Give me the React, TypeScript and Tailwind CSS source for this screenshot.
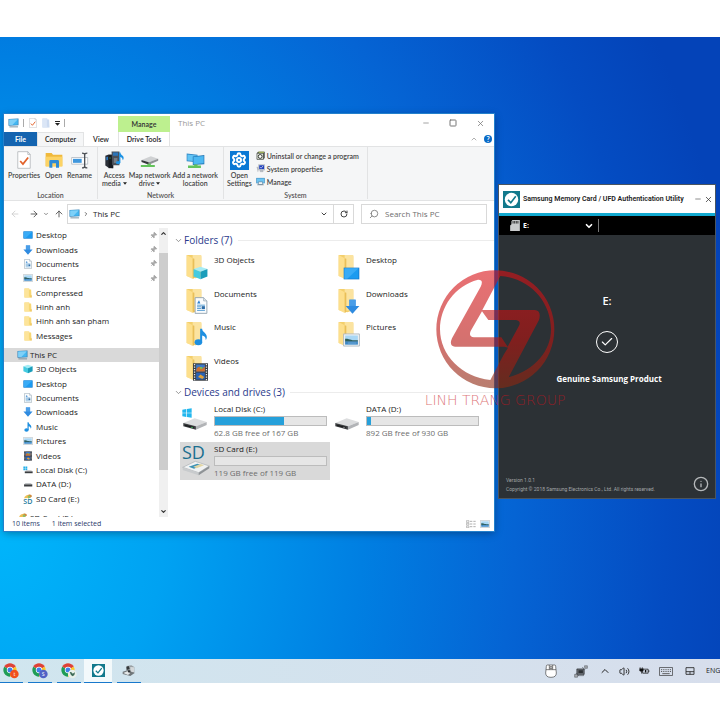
import { useState } from "react";
import type { ReactNode } from "react";
import {
  ArrowLeft,
  ArrowRight,
  ArrowUp,
  Check,
  ChevronDown,
  ChevronRight,
  ChevronUp,
  Info,
  Minus,
  Pin,
  RotateCw,
  Search,
  Settings,
  Square,
  Volume2,
  X,
} from "lucide-react";

/* ---------- icons ---------- */

function PcIcon({ className }: { className?: string }) {
  return (
    <svg viewBox="0 0 24 22" className={className}>
      <path d="M1 2l22-1v15l-22 1z" fill="#2f7fb5" />
      <path d="M2.500 3.400l19-.9v12.200l-19 .9z" fill="#45b7f2" />
      <path d="M2.500 3.400l19-.9-12 12.800-7 .3z" fill="#7ed0f8" />
      <path d="M3 19.500h19" stroke="#6b8799" strokeWidth="2" />
    </svg>
  );
}

function DesktopIcon({ className }: { className?: string }) {
  return (
    <svg viewBox="0 0 24 20" preserveAspectRatio="none" className={className}>
      <path d="M1 1h22v18H1z" fill="#1173c9" />
      <path d="M2 2h20v16H2z" fill="#1c9bf0" />
      <path d="M2 2h20L6 18H2z" fill="#39abf6" />
    </svg>
  );
}

function DownloadIcon({ className }: { className?: string }) {
  return (
    <svg viewBox="0 0 24 24" className={className}>
      <path d="M7 1h10v10h6L12 23.500 1 11h6z" fill="#2f8be0" />
      <path d="M7 1h10v10h-10z" fill="#4a9ee8" />
    </svg>
  );
}

function DocumentIcon({ className }: { className?: string }) {
  return (
    <svg viewBox="0 0 20 26" className={className}>
      <path d="M1 1h13l5 5v19H1z" fill="#fafcfd" stroke="#93a3b0" strokeWidth="1.400" />
      <path d="M14 1v5h5" fill="#dfe6ea" stroke="#93a3b0" />
      <path d="M4 10l3-5 2 5z" fill="#2b7fd0" />
      <path d="M4 12.500h12M4 15h6M4 17.500h6M4 20.500h12" stroke="#5a9fd4" strokeWidth="1.500" />
      <path d="M11 14h5v4.500h-5z" fill="#2b6ca8" />
    </svg>
  );
}

function PictureIcon({ className }: { className?: string }) {
  return (
    <svg viewBox="0 0 28 22" className={className}>
      <path d="M1 1h26v20H1z" fill="#f3f5f6" stroke="#a9b3ba" strokeWidth="1.400" />
      <path d="M3.500 3.500h21v15h-21z" fill="#a9d7f5" />
      <path d="M3.500 9c6-1 7 3 21 2.500V14h-21z" fill="#2e5f5c" />
      <path d="M3.500 13.500h21v5h-21z" fill="#3f87c4" />
      <path d="M8 16h14" stroke="#8cc2e8" />
    </svg>
  );
}

function MusicIcon({ className }: { className?: string }) {
  return (
    <svg viewBox="0 0 24 30" className={className}>
      <ellipse cx="7.500" cy="24" rx="6.500" ry="5" fill="#1e8fe0" />
      <path d="M10.500 24V1h3.500c0 6 8 7 8 14 0 2-.8 4-2 5 .5-5-3-7-6-7.500V24z" fill="#1e8fe0" />
    </svg>
  );
}

function VideoIcon({ className }: { className?: string }) {
  return (
    <svg viewBox="0 0 24 28" className={className}>
      <path d="M0 0h24v28H0z" fill="#3b3f45" />
      <path d="M5 2h14v11H5z" fill="#3c78c8" />
      <path d="M5 15h14v11H5z" fill="#2a62b4" />
      <path d="M6 8l4-3 4 4 5-4v8H5z" fill="#cf6f2f" />
      <path d="M8 22l4-4 6 4-3 3z" fill="#e0a23a" />
      <path d="M11 6h4v3h-4z" fill="#7fc04a" />
      <path d="M2.500 1v26M21.500 1v26" stroke="#e8eaec" strokeWidth="2" strokeDasharray="2 2" />
    </svg>
  );
}

function CubeIcon({ className }: { className?: string }) {
  return (
    <svg viewBox="0 0 26 24" className={className}>
      <path d="M13 1l12 4-12 5L1 5z" fill="#a5ecf5" />
      <path d="M1 5l12 5v13L1 18z" fill="#45cbe0" />
      <path d="M25 5l-12 5v13l12-5z" fill="#1a9dba" />
    </svg>
  );
}

function SmallFolderIcon({ className }: { className?: string }) {
  return (
    <svg viewBox="0 0 18 22" className={className}>
      <path d="M1 1h11v2h4l1 18H1z" fill="#f7d774" />
      <path d="M1 1h10v18l5 2H1z" fill="#fde49a" />
      <path d="M15 16h2v5h-2z" fill="#e8b94a" />
    </svg>
  );
}

function NewFolderIcon({ className }: { className?: string }) {
  return (
    <svg viewBox="0 0 18 22" className={className}>
      <path d="M1 1h11v2h4l1 18H1z" fill="#cbdaf0" />
      <path d="M1 1h10v18l5 2H1z" fill="#dbe6f6" />
    </svg>
  );
}

function DriveIcon({ className, light = "#3fd05c" }: { className?: string; light?: string }) {
  return (
    <svg viewBox="0 0 78 38" className={className}>
      <path d="M2 16L38 1l38 12-34 13z" fill="#dcddde" />
      <path d="M2 16l40 10v11L2 26z" fill="#3c3e41" />
      <path d="M42 26l34-13v9L42 37z" fill="#b2b4b7" />
      <path d="M7 21l28 7v4L7 25z" fill="#1c1d1f" />
      <path d="M27 28l5 1.200v2.500l-5-1.200z" fill={light} />
    </svg>
  );
}

function WindowsLogo({ className }: { className?: string }) {
  return (
    <svg viewBox="0 0 30 28" className={className}>
      <path d="M1 4l12-2v11H1zM15 1.700L29 0v13H15zM1 15h12v11L1 24zM15 15h14v13l-14-1.700z" fill="#22b7ee" />
    </svg>
  );
}

function LocalDiskSmall({ className }: { className?: string }) {
  return (
    <svg viewBox="0 0 28 22" className={className}>
      <path d="M1 1h5v5H1zM7 1h5v5H7zM1 7h5v5H1zM7 7h5v5H7z" fill="#25b0ea" />
      <path d="M5 15l4-3h14l4 3z" fill="#c3c6c9" />
      <path d="M5 15h22v5H5z" fill="#3a3d40" />
    </svg>
  );
}

function DataDiskSmall({ className }: { className?: string }) {
  return (
    <svg viewBox="0 0 28 22" className={className}>
      <path d="M3 12l4-4h14l5 4z" fill="#c3c6c9" />
      <path d="M3 12h23v6H3z" fill="#3a3d40" />
    </svg>
  );
}

function SdSmall({ className }: { className?: string }) {
  return (
    <svg viewBox="0 0 28 28" className={className}>
      <path d="M3 12C5 4 12 1 18 2l-3 9z" fill="#eebf55" />
      <path d="M16 2c4-2 9 0 9 5l-6 4-5-2z" fill="#d2893c" />
      <path d="M13 6l6-2 2 6-6 3z" fill="#8bbf67" />
      <text x="1" y="27" fontSize="20" fontFamily="Open Sans, sans-serif" fontWeight="600" fill="#227a9c">
        SD
      </text>
    </svg>
  );
}

function FolderTileIcon({ children }: { children: ReactNode }) {
  return (
    <span className="relative block h-[26px] w-[22px]">
      <svg viewBox="0 0 48 78" className="h-[26px] w-4">
        <path d="M2 3h38l6 4v60l-18 6L2 66z" fill="#f3cf6c" />
        <path d="M20 3h26v62l-26 3z" fill="#fbe3a0" />
        <path d="M2 3l18 10v62L2 66z" fill="#fddf8c" />
        <path d="M20 13v62l5-3V14z" fill="#e9bf58" />
      </svg>
      <span className="absolute right-0 bottom-0 flex">{children}</span>
    </span>
  );
}

function PropertiesIcon({ className }: { className?: string }) {
  return (
    <svg viewBox="0 0 40 52" className={className}>
      <path d="M2 2h29l7 8v40H2z" fill="#fff" stroke="#a7abb0" strokeWidth="2" />
      <path d="M31 2v8h7" fill="none" stroke="#a7abb0" strokeWidth="2" />
      <path d="M9 29l8 9 15-19" fill="none" stroke="#e2622b" strokeWidth="5" />
    </svg>
  );
}

function OpenFolderIcon({ className }: { className?: string }) {
  return (
    <svg viewBox="0 0 52 48" className={className}>
      <path d="M1 3h18l4 5h28v34H1z" fill="#f0b93c" />
      <path d="M1 14h50v30H1z" fill="#fcd365" />
      <path d="M12 47V28q0-4 4-4h21q4 0 4 4v19h-9V34H21v13z" fill="#2e8bd6" />
    </svg>
  );
}

function RenameIcon({ className }: { className?: string }) {
  return (
    <svg viewBox="0 0 54 50" className={className}>
      <path d="M2 16h48v20H2z" fill="#fff" stroke="#a5acb5" strokeWidth="2" />
      <path d="M6 20h26v12H6z" fill="#3f97dd" />
      <path
        d="M33 3q8 0 8 5v34q0 5-8 5M49 3q-8 0-8 5M49 47q-8 0-8-5"
        fill="none"
        stroke="#4d5157"
        strokeWidth="4"
      />
    </svg>
  );
}

function MediaIcon({ className }: { className?: string }) {
  return (
    <svg viewBox="0 0 58 54" className={className}>
      <path d="M1 14l10-4h14v42l-14-1L1 44z" fill="#2c3038" />
      <path d="M11 12h14v40H11z" fill="#171a20" />
      <path d="M4 18l5-1v10l-5 1z" fill="#2f7dcb" />
      <path d="M20 1h24v42H22z" fill="#4a5059" />
      <path d="M24 4h16v10H24z" fill="#2c74b8" />
      <path d="M27 21h11v15H27z" fill="#767c85" />
      <path d="M13 21h5" stroke="#47c055" strokeWidth="2" />
      <ellipse cx="40" cy="35" rx="7" ry="5" fill="#1d93e4" />
      <path d="M43 35V4h4c0 8 10 8 10 17 0 3-1 5-3 7 0-7-4-9-7-10v17z" fill="#1d93e4" />
    </svg>
  );
}

function NetworkDriveIcon({ className }: { className?: string }) {
  return (
    <svg viewBox="0 0 56 36" className={className}>
      <path d="M4 12L32 1l22 7-28 11z" fill="#cfd1d3" />
      <path d="M4 12l22 7v7L4 18z" fill="#36393c" />
      <path d="M26 19L54 8v6L26 26z" fill="#8f9295" />
      <path d="M2 27h20v-4h10v4h12v6H2z" fill="#63c35b" />
    </svg>
  );
}

function NetworkLocationIcon({ className }: { className?: string }) {
  return (
    <svg viewBox="0 0 56 48" className={className}>
      <path d="M2 3l32 4v22L2 26z" fill="#2f86c4" />
      <path d="M4 6l28 3v17L4 24z" fill="#62c4f5" />
      <path d="M20 12l34-4v27l-34 2z" fill="#2478b6" />
      <path d="M22 14l30-3v21l-30 3z" fill="#4db8f2" />
      <path d="M6 39h18v-3h10v3h10v7H6z" fill="#63c35b" />
    </svg>
  );
}

function UninstallIcon({ className }: { className?: string }) {
  return (
    <svg viewBox="0 0 28 28" className={className}>
      <path d="M3 6l4-4h20v20l-4 4H3z" fill="#3c403c" />
      <path d="M3 7h20v19H3z" fill="#e9ecdf" stroke="#3c403c" strokeWidth="2" />
      <circle cx="13" cy="17" r="6" fill="#fff" stroke="#30352f" strokeWidth="3" />
      <path d="M8 2h17v4H8z" fill="#a5b65b" />
    </svg>
  );
}

function SystemPropertiesIcon({ className }: { className?: string }) {
  return (
    <svg viewBox="0 0 28 26" className={className}>
      <path d="M8 1h19v17H8z" fill="#d4d8dd" stroke="#7c838c" />
      <path d="M10 3h15v12H10z" fill="#1f3fbd" />
      <path d="M13 9l3 3 6-7" fill="none" stroke="#fff" strokeWidth="2" />
      <path d="M2 9h4v15M13 19h9v4h-9z" fill="#b9bec5" stroke="#8a919a" />
    </svg>
  );
}

function ManageIcon({ className }: { className?: string }) {
  return (
    <svg viewBox="0 0 30 26" className={className}>
      <path d="M1 1h28v18H1z" fill="#2e7db5" />
      <path d="M2.500 2.500h25v15h-25z" fill="#6cc4f2" />
      <path d="M8 14h14v9H8z" fill="#f2f5f7" stroke="#4f7897" strokeWidth="2" />
      <path d="M4 24h22" stroke="#5f7584" strokeWidth="2" />
    </svg>
  );
}

function MagicianIcon({ className }: { className?: string }) {
  return (
    <svg viewBox="0 0 48 48" className={className}>
      <path d="M0 0h48v48H0z" fill="#12798c" />
      <circle cx="24" cy="24" r="19" fill="#fff" />
      <path d="M14 25l8 8 14-18" fill="none" stroke="#12798c" strokeWidth="4.500" />
    </svg>
  );
}

function ChromeIcon({ badge, letter, className }: { badge: string; letter: string; className?: string }) {
  return (
    <svg viewBox="0 0 48 48" className={className}>
      <circle cx="21" cy="21" r="20" fill="#e8eef0" />
      <path d="M21 21L3.700 11A20 20 0 0 1 38.300 11z" fill="#de4236" />
      <path d="M21 21L3.700 11A20 20 0 0 0 21 41z" fill="#1f9d57" />
      <path d="M21 21h20A20 20 0 0 1 21 41zM21 21l17.300-10A20 20 0 0 1 41 21z" fill="#fbc928" />
      <circle cx="21" cy="21" r="9.500" fill="#fff" />
      <circle cx="21" cy="21" r="7.500" fill="#3f80ea" />
      <circle cx="34" cy="33" r="13" fill={badge} />
      {letter ? (
        <text x="34" y="39" textAnchor="middle" fontSize="16" fontFamily="Open Sans, sans-serif" fill="#fff">
          {letter}
        </text>
      ) : (
        <path d="M26 27q7-1 9 5l7-4q0 9-7 12-6-2-9-13z" fill="#3f6b57" />
      )}
    </svg>
  );
}

function CardReaderIcon({ className }: { className?: string }) {
  return (
    <svg viewBox="0 0 42 36" className={className}>
      <path d="M14 3l14-2 9 5v18l-15 3-8-5z" fill="#9aa0a3" />
      <path d="M25 6l11 1v14l-11 2z" fill="#d3d7d9" />
      <path d="M13 5l7-2 3 9-9 3z" fill="#34383b" />
      <path d="M2 20l14-4 22 8-13 9-23-6z" fill="#71777a" />
      <path d="M4 24l12-5 9 5-7 6z" fill="#e4e7e8" />
      <path d="M18 16h7v6h-7z" fill="#2b2f32" />
    </svg>
  );
}

function MouseIcon({ className }: { className?: string }) {
  return (
    <svg viewBox="0 0 36 42" className={className}>
      <path d="M7 3h22q3 0 3 4l2 20q0 13-16 13T2 27L4 7q0-4 3-4z" fill="#fff" stroke="#444" strokeWidth="2" />
      <path d="M3 17h30M13 3v14M23 3v14M15 8h6v6h-6z" fill="none" stroke="#444" strokeWidth="2" />
    </svg>
  );
}

function SatelliteIcon({ className }: { className?: string }) {
  return (
    <svg viewBox="0 0 44 40" className={className}>
      <path d="M9 12h23v17H9z" fill="#6c7178" stroke="#1d2023" strokeWidth="2" />
      <path d="M14 16h14v9H14z" fill="#2d3034" />
      <path d="M33 2h9v8h-8zM2 29h9v9H2z" fill="#a7abb0" stroke="#44484d" strokeWidth="1.500" />
      <path d="M26 6l8 8M6 25l9 9M12 33h18v-4" fill="none" stroke="#44484d" strokeWidth="2" />
    </svg>
  );
}

function BatteryPlugIcon({ className }: { className?: string }) {
  return (
    <svg viewBox="0 0 30 22" className={className}>
      <path d="M10 6h15v11H10z" fill="none" stroke="#111" strokeWidth="2" />
      <path d="M16 8h4v7h-4zM26 9h2v5h-2z" fill="#111" />
      <path d="M1 4h11v5q0 4-5.500 4T1 9z" fill="#111" />
      <path d="M3 1v4M9 1v4M7 12v6" stroke="#111" strokeWidth="2" />
    </svg>
  );
}

function KeyboardIcon({ className }: { className?: string }) {
  return (
    <svg viewBox="0 0 42 27" className={className}>
      <path d="M1.500 1.500h39v24h-39z" fill="none" stroke="#333" strokeWidth="2" />
      <path d="M6 8h30M6 13.500h30" stroke="#444" strokeWidth="2.500" strokeDasharray="3 2.400" />
      <path d="M10 20h22" stroke="#444" strokeWidth="2.500" />
    </svg>
  );
}

function TouchpadIcon({ className }: { className?: string }) {
  return (
    <svg viewBox="0 0 28 24" className={className}>
      <path d="M2 2h24v20H2zM2 14h24M14 14v8" fill="none" stroke="#222" strokeWidth="2.500" />
    </svg>
  );
}

function MicroSdIcon({ className }: { className?: string }) {
  return (
    <svg viewBox="0 0 30 34" className={className}>
      <path d="M7 0h23v34H0V17l4-4V4z" fill="#c9cbcc" />
      <path d="M9 3v8M14 3v8M19 3v8M24 3v8" stroke="#111" strokeWidth="2.500" />
    </svg>
  );
}

/* ---------- data ---------- */

const quickAccess = [
  { name: "Desktop", icon: <DesktopIcon className="h-2 w-[10px]" />, pinned: true },
  { name: "Downloads", icon: <DownloadIcon className="h-[10px] w-[10px]" />, pinned: true },
  { name: "Documents", icon: <DocumentIcon className="h-[10px] w-2" />, pinned: true },
  { name: "Pictures", icon: <PictureIcon className="h-2 w-[10px]" />, pinned: true },
  { name: "Compressed", icon: <SmallFolderIcon className="h-[10px] w-2" /> },
  { name: "Hinh anh", icon: <SmallFolderIcon className="h-[10px] w-2" /> },
  { name: "Hinh anh san pham", icon: <SmallFolderIcon className="h-[10px] w-2" /> },
  { name: "Messages", icon: <SmallFolderIcon className="h-[10px] w-2" /> },
];

const thisPc = [
  { name: "3D Objects", icon: <CubeIcon className="h-[10px] w-[10px]" /> },
  { name: "Desktop", icon: <DesktopIcon className="h-2 w-[10px]" /> },
  { name: "Documents", icon: <DocumentIcon className="h-[10px] w-2" /> },
  { name: "Downloads", icon: <DownloadIcon className="h-[10px] w-[10px]" /> },
  { name: "Music", icon: <MusicIcon className="h-[10px] w-2" /> },
  { name: "Pictures", icon: <PictureIcon className="h-2 w-[10px]" /> },
  { name: "Videos", icon: <VideoIcon className="h-[10px] w-2" /> },
  { name: "Local Disk (C:)", icon: <LocalDiskSmall className="h-2 w-[10px]" /> },
  { name: "DATA (D:)", icon: <DataDiskSmall className="h-2 w-[10px]" /> },
  { name: "SD Card (E:)", icon: <SdSmall className="h-[10px] w-[10px]" /> },
];

const folders = [
  { name: "3D Objects", icon: <CubeIcon className="h-[14px] w-[15px]" /> },
  { name: "Desktop", icon: <DesktopIcon className="h-[13px] w-[17px]" /> },
  { name: "Documents", icon: <DocumentIcon className="h-[17px] w-[14px]" /> },
  { name: "Downloads", icon: <DownloadIcon className="h-[15px] w-[15px]" /> },
  { name: "Music", icon: <MusicIcon className="h-5 w-[14px]" /> },
  { name: "Pictures", icon: <PictureIcon className="h-[14px] w-[17px]" /> },
  { name: "Videos", icon: <VideoIcon className="h-[18px] w-[15px]" /> },
];

const drives = [
  {
    name: "Local Disk (C:)",
    free: "62.8 GB free of 167 GB",
    used: 62,
    icon: (
      <span className="flex flex-col pt-[2px]">
        <WindowsLogo className="h-[10px] w-[10px]" />
        <DriveIcon className="h-3 w-[26px]" />
      </span>
    ),
  },
  {
    name: "DATA (D:)",
    free: "892 GB free of 930 GB",
    used: 4,
    icon: <DriveIcon className="mt-3 h-3 w-[26px]" light="#8a8d90" />,
  },
  {
    name: "SD Card (E:)",
    free: "119 GB free of 119 GB",
    used: 0,
    icon: (
      <svg viewBox="0 0 84 90" className="h-[30px] w-7">
        <text x="0" y="40" fontSize="54" fontFamily="Open Sans, sans-serif" fill="#1b6f8f">
          SD
        </text>
        <path d="M2 64l38-18 42 14-32 20z" fill="#f1f3f4" stroke="#a9adb0" strokeWidth="2" />
        <path d="M2 64l48 16v8L2 72z" fill="#c8cbcd" />
        <path d="M50 80l32-20v7L50 88z" fill="#8f9396" />
        <path d="M20 62l26-9 14 5-24 10z" fill="#3d92b5" />
        <path d="M34 62l22-8 10 4-22 9z" fill="#e3d6a4" />
      </svg>
    ),
  },
];

/* ---------- explorer ---------- */

function TreeItem({ name, icon, pinned }: { name: string; icon: ReactNode; pinned?: boolean }) {
  return (
    <button className="flex w-full items-center pl-[18px] text-left">
      <span className="flex w-3 justify-center">{icon}</span>
      <span className="ml-[2px] flex-1">{name}</span>
      {pinned && <Pin className="mr-[2px] h-[7px] w-[7px] rotate-45 fill-[#aaa] text-[#999]" />}
    </button>
  );
}

function RibbonButton({ icon, lines, menu }: { icon: ReactNode; lines: string[]; menu?: boolean }) {
  return (
    <button className="flex flex-col items-center">
      <span className="flex h-[22px] items-center">{icon}</span>
      {lines.map((line, i) => (
        <span key={line} className="flex items-center whitespace-nowrap">
          {line}
          {menu && i === lines.length - 1 && (
            <svg viewBox="0 0 8 5" className="ml-[2px] h-[3px] w-1">
              <path d="M0 0h8L4 5z" fill="#222" />
            </svg>
          )}
        </span>
      ))}
    </button>
  );
}

function RibbonGroup({ label, children, className }: { label: string; children: ReactNode; className: string }) {
  return (
    <div className={`flex flex-col justify-between border-r border-[#e2e3e4] pt-[2px] ${className}`}>
      <div className="flex items-start">{children}</div>
      <div className="text-center text-[#555]">{label}</div>
    </div>
  );
}

function SectionHeader({ title }: { title: string }) {
  return (
    <div className="flex h-4 items-center gap-[1px]">
      <ChevronDown className="h-[9px] w-[9px] text-[#777]" strokeWidth={2} />
      <h2 className="text-[10px] leading-4 text-[#2a3a8c]">{title}</h2>
      <div className="ml-1 h-px flex-1 bg-[#ececec]" />
    </div>
  );
}

function Explorer() {
  const [query, setQuery] = useState("");
  const [selected, setSelected] = useState("SD Card (E:)");

  return (
    <section className="absolute top-[77px] left-1 flex w-[490px] flex-col bg-white font-['Open_Sans',sans-serif] text-[8px] leading-[10px] text-[#222] shadow-[0_0_0_1px_#2380cc,0_2px_8px_rgba(0,0,0,0.35)]">
      <header className="flex h-[18px]">
        <div className="flex w-[114px] items-center pl-1">
          <PcIcon className="h-[10px] w-[11px]" />
          <span className="ml-1 h-2 w-px bg-[#aaa]" />
          <PropertiesIcon className="ml-[5px] h-[10px] w-2" />
          <NewFolderIcon className="ml-[5px] h-[10px] w-2" />
          <svg viewBox="0 0 8 8" className="ml-[5px] h-[5px] w-[5px]">
            <path d="M0 0h8v1.500H0zM0 3h8L4 7.500z" fill="#222" />
          </svg>
          <span className="ml-1 h-2 w-px bg-[#aaa]" />
        </div>
        <button className="mt-[2px] w-[52px] bg-[#bdf08f] font-['Lato',sans-serif] text-[7px] font-semibold text-[#333]">
          Manage
        </button>
        <h1 className="flex flex-1 items-center pl-2 text-[8px] text-[#999]">This PC</h1>
        <div className="flex items-center gap-[19px] pr-[9px] text-[#777]">
          <button aria-label="Minimize">
            <Minus className="h-2 w-2" strokeWidth={2} />
          </button>
          <button aria-label="Maximize">
            <Square className="h-2 w-2" strokeWidth={3} />
          </button>
          <button aria-label="Close">
            <X className="h-[9px] w-[9px]" strokeWidth={2} />
          </button>
        </div>
      </header>

      <nav className="flex h-[14px] items-stretch font-['Lato',sans-serif] text-[7px] font-semibold">
        <button className="w-[33px] bg-[#1464b0] font-bold text-white">File</button>
        <button className="w-[47px] border border-b-0 border-[#e2e3e4] bg-[#f5f6f7] pb-[1px]">Computer</button>
        <button className="w-[34px]">View</button>
        <button className="w-[52px] border-x border-[#e2e3e4]">Drive Tools</button>
        <div className="flex flex-1 items-center justify-end gap-[6px] pr-[2px]">
          <ChevronUp className="h-2 w-2 text-[#888]" />
          <button
            aria-label="Help"
            className="flex h-2 w-2 items-center justify-center rounded-full bg-[#0a6bc7] text-[7px] font-bold text-white"
          >
            ?
          </button>
        </div>
      </nav>

      <div className="flex h-[55px] border-y border-[#e2e3e4] bg-[#f5f6f7] pb-[1px] font-['Lato',sans-serif] text-[7px] leading-[8px] font-semibold text-[#444]">
        <RibbonGroup label="Location" className="w-[94px]">
          <div className="flex flex-1 justify-between pr-[5px] pl-1">
            <RibbonButton icon={<PropertiesIcon className="h-[18px] w-[14px]" />} lines={["Properties"]} />
            <RibbonButton icon={<OpenFolderIcon className="h-4 w-[18px]" />} lines={["Open"]} />
            <RibbonButton icon={<RenameIcon className="h-[17px] w-[18px]" />} lines={["Rename"]} />
          </div>
        </RibbonGroup>
        <RibbonGroup label="Network" className="w-[126px]">
          <div className="flex flex-1 justify-between pr-[5px] pl-1">
            <RibbonButton icon={<MediaIcon className="h-[18px] w-[19px]" />} lines={["Access", "media"]} menu />
            <RibbonButton
              icon={<NetworkDriveIcon className="mt-1 h-3 w-[19px]" />}
              lines={["Map network", "drive"]}
              menu
            />
            <RibbonButton
              icon={<NetworkLocationIcon className="h-[17px] w-[19px]" />}
              lines={["Add a network", "location"]}
            />
          </div>
        </RibbonGroup>
        <RibbonGroup label="System" className="w-[144px]">
          <div className="pl-[3px]">
            <RibbonButton
              icon={
                <span className="flex h-[19px] w-[19px] items-center justify-center bg-[#0a78d4] text-white">
                  <Settings className="h-4 w-4" strokeWidth={3} />
                </span>
              }
              lines={["Open", "Settings"]}
            />
          </div>
          <div className="ml-1 flex flex-col items-start">
            <button className="flex h-[13px] items-center gap-[2px] whitespace-nowrap">
              <UninstallIcon className="h-[9px] w-[9px]" />
              Uninstall or change a program
            </button>
            <button className="flex h-[13px] items-center gap-[2px]">
              <SystemPropertiesIcon className="h-[9px] w-[9px]" />
              System properties
            </button>
            <button className="flex h-[13px] items-center gap-[2px]">
              <ManageIcon className="h-[9px] w-[9px]" />
              Manage
            </button>
          </div>
        </RibbonGroup>
      </div>

      <div className="flex h-[27px] items-center pr-[7px] pb-[2px]">
        <div className="flex w-[63px] items-center justify-between pr-[3px] pl-[6px]">
          <button aria-label="Back">
            <ArrowLeft className="h-[10px] w-[10px] text-[#ccc]" />
          </button>
          <button aria-label="Forward" className="ml-1">
            <ArrowRight className="h-[10px] w-[10px] text-[#444]" />
          </button>
          <button aria-label="Recent locations">
            <ChevronDown className="h-[6px] w-[6px] text-[#666]" strokeWidth={3} />
          </button>
          <button aria-label="Up">
            <ArrowUp className="h-[10px] w-[10px] text-[#444]" />
          </button>
        </div>
        <div className="flex h-5 flex-1 items-center border border-[#d9d9d9]">
          <PcIcon className="ml-[1px] h-[10px] w-[11px]" />
          <ChevronRight className="ml-[3px] h-[6px] w-[6px] text-[#444]" strokeWidth={3} />
          <span className="ml-1 flex-1">This PC</span>
          <ChevronDown className="mr-[5px] h-2 w-2 text-[#444]" strokeWidth={3} />
          <button
            aria-label="Refresh"
            className="flex h-full w-5 items-center justify-center border-l border-[#d9d9d9]"
          >
            <RotateCw className="h-2 w-2 text-[#444]" strokeWidth={3} />
          </button>
        </div>
        <label className="ml-[7px] flex h-5 w-[126px] items-center border border-[#d9d9d9] pl-[7px]">
          <Search className="h-[10px] w-[10px] shrink-0 -scale-x-100 text-[#777]" strokeWidth={2} />
          <input
            aria-label="Search This PC"
            placeholder="Search This PC"
            value={query}
            onChange={(e) => setQuery(e.target.value)}
            className="ml-[6px] w-full outline-none placeholder:text-[#6d6d6d]"
          />
        </label>
      </div>

      <div className="flex h-[289px]">
        <aside className="flex w-[155px] flex-col overflow-hidden">
          <div className="grid h-[115px] shrink-0 auto-rows-fr">
            {quickAccess.map((item) => (
              <TreeItem key={item.name} {...item} />
            ))}
          </div>
          <button className="mt-[5px] flex h-[14px] shrink-0 items-center bg-[#d9d9d9] pl-[13px] text-left">
            <PcIcon className="h-[10px] w-[11px]" />
            <span className="ml-[2px]">This PC</span>
          </button>
          <div className="grid h-[144px] shrink-0 auto-rows-fr">
            {thisPc.map((item) => (
              <TreeItem key={item.name} {...item} />
            ))}
          </div>
          <button className="mt-[5px] flex h-[14px] shrink-0 items-center pl-[14px] text-left">
            <SdSmall className="h-[10px] w-[10px]" />
            <span className="ml-[2px]">SD Card (E:)</span>
          </button>
        </aside>
        <div className="flex w-[9px] flex-col items-center bg-[#f0f0f0] py-[2px]">
          <ChevronUp className="h-[7px] w-[7px] text-[#333]" strokeWidth={4} />
          <div className="mt-4 h-[217px] w-full bg-[#cdcdcd]" />
          <ChevronDown className="mt-auto h-[7px] w-[7px] text-[#333]" strokeWidth={4} />
        </div>

        <main className="min-w-0 flex-1 pt-1 pl-[6px]">
          <SectionHeader title="Folders (7)" />
          <div className="mt-[2px] grid h-[134px] grid-cols-[152px_152px] auto-rows-fr pl-[6px]">
            {folders.map((folder) => (
              <button key={folder.name} className="flex items-start pt-1 text-left">
                <span className="w-[34px] pl-[6px]">
                  <FolderTileIcon>{folder.icon}</FolderTileIcon>
                </span>
                <span className="pt-[1px]">{folder.name}</span>
              </button>
            ))}
          </div>
          <SectionHeader title="Devices and drives (3)" />
          <div className="mt-[2px] grid grid-cols-[150px_150px] gap-[2px] pl-[6px]">
            {drives.map((drive) => (
              <button
                key={drive.name}
                onClick={() => setSelected(drive.name)}
                className={`flex h-[38px] items-start pt-[2px] pr-[3px] text-left ${
                  selected === drive.name ? "bg-[#d9d9d9]" : ""
                }`}
              >
                <span className="flex w-[34px] items-start pt-[2px] pl-[2px]">{drive.icon}</span>
                <span className="flex flex-1 flex-col">
                  <span>{drive.name}</span>
                  <span className="mt-[2px] flex h-[10px] border border-[#bcbcbc] bg-[#e6e6e6]">
                    <span className="bg-[#26a0da]" style={{ width: `${drive.used}%` }} />
                  </span>
                  <span className="mt-[2px] text-[#6d6d6d]">{drive.free}</span>
                </span>
              </button>
            ))}
          </div>
        </main>
      </div>

      <footer className="flex h-[14px] items-center gap-3 pr-1 pl-2 text-[7px] text-[#1f3a6b]">
        <span>10 items</span>
        <span className="flex-1">1 item selected</span>
        <span className="flex gap-1">
          <svg viewBox="0 0 30 24" className="h-2 w-[10px]">
            <path d="M1 2h8v5H1zM1 10h8v5H1zM1 18h8v5H1z" fill="none" stroke="#888" strokeWidth="1.500" />
            <path d="M12 4h7M22 4h7M12 12h7M22 12h7M12 20h7M22 20h7" stroke="#888" strokeWidth="2" />
          </svg>
          <PictureIcon className="h-2 w-[10px]" />
        </span>
      </footer>
    </section>
  );
}

/* ---------- authentication utility ---------- */

function AuthUtility() {
  return (
    <section className="absolute top-[148px] left-[499px] flex h-[313px] w-[216px] flex-col bg-[#2c3135] font-['Open_Sans',sans-serif] text-white shadow-[0_0_0_1px_#4a5560]">
      <header className="flex h-[28px] items-center bg-white pr-[2px] pl-1 text-[#222]">
        <MagicianIcon className="h-[17px] w-[17px]" />
        <h1 className="ml-[3px] flex-1 font-['Roboto',sans-serif] text-[7px] font-semibold whitespace-nowrap">
          Samsung Memory Card / UFD Authentication Utility
        </h1>
        <button aria-label="Minimize">
          <Minus className="h-2 w-2 text-[#555]" strokeWidth={2} />
        </button>
        <button aria-label="Close" className="ml-[2px]">
          <X className="h-[9px] w-[9px] text-[#333]" strokeWidth={2} />
        </button>
      </header>
      <div className="h-[3px] bg-[#12a9d0]" />
      <div className="flex h-[19px] items-center bg-black pl-[11px]">
        <MicroSdIcon className="h-[11px] w-[10px]" />
        <div className="ml-[3px] flex h-[13px] w-[76px] items-center border-r border-[#777]">
          <select
            aria-label="Drive"
            className="flex-1 appearance-none bg-black text-[7px] leading-[10px] font-bold text-white outline-none"
          >
            <option>E:</option>
          </select>
          <ChevronDown className="mr-1 h-[10px] w-[10px]" strokeWidth={4} />
        </div>
      </div>
      <div className="flex flex-1 flex-col items-center pt-[59px]">
        <p className="text-[11px] leading-[14px] font-semibold">E:</p>
        <span className="mt-[23px] flex h-[22px] w-[22px] items-center justify-center rounded-full border border-white">
          <Check className="h-[14px] w-[14px]" strokeWidth={2} />
        </span>
        <p className="mt-5 pl-1 text-[8px] leading-3 font-bold">Genuine Samsung Product</p>
      </div>
      <footer className="flex items-end justify-between pr-[6px] pb-1 pl-[7px] font-['Roboto',sans-serif] text-[5px] leading-[9px] text-[#a3a6a8]">
        <p>
          Version 1.0.1
          <br />
          Copyright © 2018 Samsung Electronics Co., Ltd. All rights reserved.
        </p>
        <button aria-label="About" className="mb-[2px]">
          <Info className="h-4 w-4 text-[#b5b8ba]" strokeWidth={2} />
        </button>
      </footer>
    </section>
  );
}

/* ---------- brand overlay ---------- */

function BrandOverlay() {
  return (
    <div className="pointer-events-none absolute top-[223px] left-[420px] flex w-[150px] flex-col items-center opacity-60">
      <svg viewBox="0 0 450 400" className="w-full">
        <defs>
          <linearGradient id="brand" x1="0" y1="0" x2="0" y2="1">
            <stop offset="0" stopColor="#dc1218" />
            <stop offset="0.600" stopColor="#b81410" />
            <stop offset="1" stopColor="#8a2a12" />
          </linearGradient>
        </defs>
        <path
          fill="url(#brand)"
          fillRule="evenodd"
          d="M226 31a177 177 0 1 1 0 354a177 177 0 1 1 0-354z
             M174 59C104 78 60 140 60 208C60 286 126 352 211 360L251 284L264 263L254 260L105 260Q86 258 96 235L182 80Q192 58 174 59z
             M241 48C330 54 393 126 393 208C393 272 346 330 266 352L357 180Q365 152 344 150L187 150z
             M186 154L205 180L288 180Q304 183 297 197L263 260L244 232L162 232Q145 230 152 213z"
        />
      </svg>
      <p className="font-['DejaVu_Sans',sans-serif] text-[14px] leading-[14px] font-extralight whitespace-nowrap text-[#c81420]">
        LINH TRANG GROUP
      </p>
    </div>
  );
}

/* ---------- taskbar ---------- */

function TaskButton({ label, active, children }: { label: string; active?: boolean; children: ReactNode }) {
  return (
    <button
      aria-label={label}
      className={`flex h-6 items-center justify-center border-b border-[#1878cc] ${
        active ? "-ml-[2px] w-7 bg-[#f3f9fb]" : "w-6"
      }`}
    >
      {children}
    </button>
  );
}

function Taskbar() {
  return (
    <footer className="flex h-6 items-center justify-between overflow-hidden bg-linear-to-r from-[#d0e6ef] to-[#d7deec] font-['Open_Sans',sans-serif] text-[7px] text-[#222]">
      <div className="-ml-[1px] flex gap-[5px]">
        <TaskButton label="Chrome">
          <ChromeIcon badge="#f0501e" letter="t" className="h-4 w-4" />
        </TaskButton>
        <TaskButton label="Chrome, work">
          <ChromeIcon badge="#5163c6" letter="S" className="h-4 w-4" />
        </TaskButton>
        <TaskButton label="Chrome, home">
          <ChromeIcon badge="#e8f0ea" letter="" className="h-4 w-4" />
        </TaskButton>
        <TaskButton label="Authentication Utility" active>
          <MagicianIcon className="h-[13px] w-[13px]" />
        </TaskButton>
        <TaskButton label="Card reader">
          <CardReaderIcon className="h-3 w-[14px]" />
        </TaskButton>
      </div>
      <div className="flex items-center">
        <MouseIcon className="h-[14px] w-3" />
        <SatelliteIcon className="ml-[17px] h-[13px] w-[14px]" />
        <ChevronUp className="ml-[11px] h-3 w-3" strokeWidth={2} />
        <Volume2 className="ml-2 h-[11px] w-[11px]" strokeWidth={2} />
        <BatteryPlugIcon className="ml-[9px] h-2 w-[11px]" />
        <KeyboardIcon className="ml-[9px] h-[9px] w-[14px]" />
        <TouchpadIcon className="ml-3 h-2 w-[10px]" />
        <span className="ml-[11px] w-[14px] whitespace-nowrap">ENG</span>
      </div>
    </footer>
  );
}

export default function App() {
  return (
    <div className="flex min-h-screen flex-col bg-white py-[37px]">
      <div className="relative flex flex-1 flex-col overflow-hidden bg-[radial-gradient(ellipse_105%_150%_at_0%_75%,#00b6fb_0%,#00a2f2_22%,#007fe2_48%,#0564d4_68%,#044cc2_88%,#0443b8_100%)]">
        <div className="flex-1">
          <Explorer />
          <AuthUtility />
          <BrandOverlay />
        </div>
        <Taskbar />
      </div>
    </div>
  );
}
